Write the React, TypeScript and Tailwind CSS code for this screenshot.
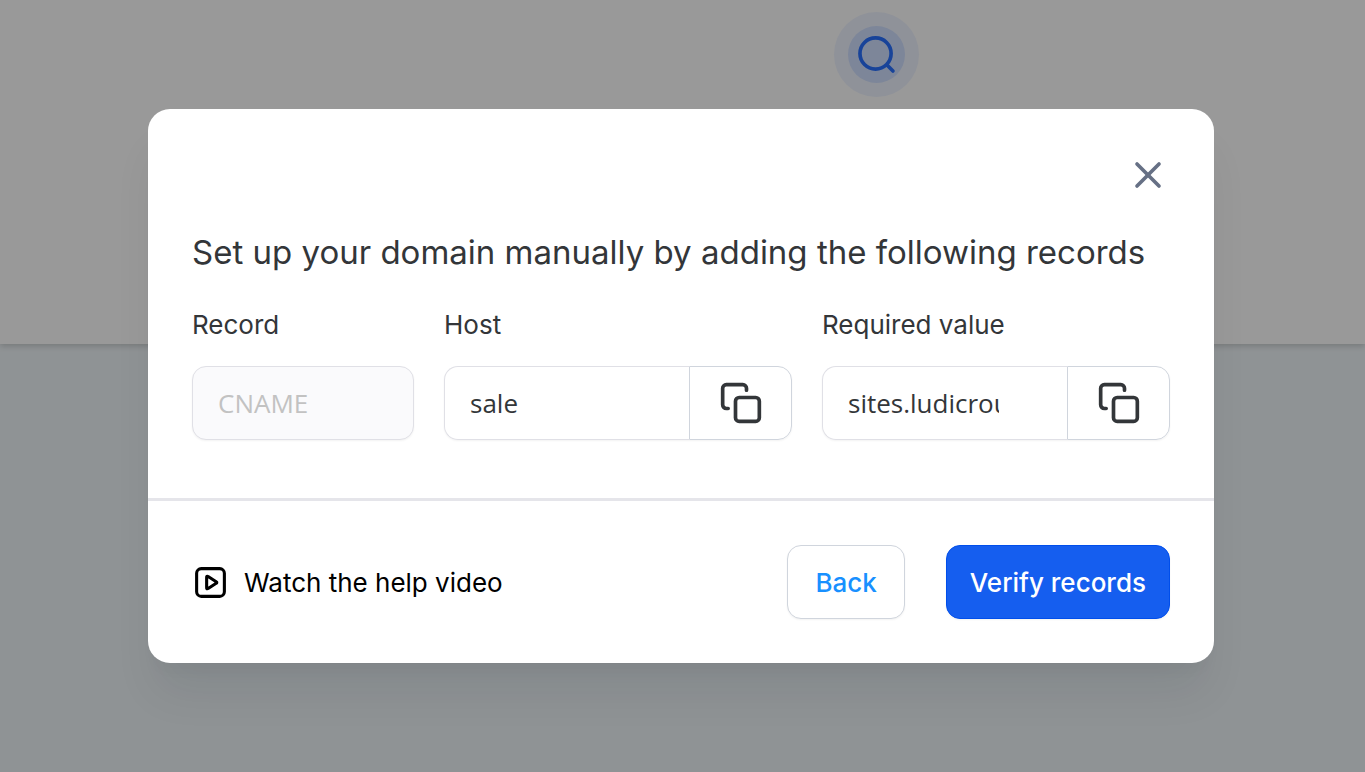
import React, { useState } from "react";
import { X } from "lucide-react";

function SearchIcon() {
  return (
    <svg
      className="size-11"
      viewBox="0 0 24 24"
      fill="none"
      stroke="currentColor"
      strokeWidth="2"
      strokeLinecap="round"
      strokeLinejoin="round"
      aria-hidden="true"
    >
      <path d="M20.7 20.7l-3.5-3.5M19.7 11.2a8.5 8.5 0 1 1-17 0 8.5 8.5 0 0 1 17 0z" />
    </svg>
  );
}

function PlaySquareIcon() {
  return (
    <svg
      className="size-[37px]"
      viewBox="0 0 24 24"
      fill="none"
      stroke="currentColor"
      strokeWidth="2"
      strokeLinecap="round"
      strokeLinejoin="round"
      aria-hidden="true"
    >
      <rect x="3" y="3" width="18" height="18" rx="3" />
      <path d="M9.5 8.97c0-.48 0-.72.1-.85a.5.5 0 0 1 .36-.2c.17-.01.37.12.77.38l4.72 3.03c.35.23.52.34.58.48a.5.5 0 0 1 0 .38c-.06.14-.23.25-.58.48l-4.72 3.03c-.4.26-.6.39-.77.38a.5.5 0 0 1-.36-.2c-.1-.13-.1-.37-.1-.85V8.97z" />
    </svg>
  );
}

function CopyIcon() {
  return (
    <svg
      className="size-11"
      viewBox="0 0 24 24"
      fill="none"
      stroke="currentColor"
      strokeWidth="2"
      strokeLinecap="round"
      strokeLinejoin="round"
      aria-hidden="true"
    >
      <rect x="9" y="9" width="13" height="13" rx="2" />
      <path d="M5 15H4a2 2 0 0 1-2-2V4a2 2 0 0 1 2-2h9a2 2 0 0 1 2 2v1" />
    </svg>
  );
}

function CopyField({
  id,
  label,
  value,
  onChange,
}: {
  id: string;
  label: string;
  value: string;
  onChange: (value: string) => void;
}) {
  return (
    <div className="flex min-w-0 flex-col gap-[23px]">
      <label htmlFor={id} className="text-[26px] leading-9">
        {label}
      </label>
      <div className="flex h-[74px] rounded-[14px] shadow-xs">
        <div className="min-w-0 flex-1 rounded-l-[14px] border border-r-0 border-[#e0e0e6] pr-[68px] pl-[25px]">
          <input
            id={id}
            type="text"
            value={value}
            onChange={(event) => onChange(event.target.value)}
            className="h-full w-full bg-transparent font-['Open_Sans','Noto_Sans',sans-serif] text-[26px] text-[#333639] outline-none"
          />
        </div>
        <button
          type="button"
          aria-label={`Copy ${label}`}
          onClick={() => navigator.clipboard?.writeText(value)}
          className="flex w-[103px] items-center justify-center rounded-r-[14px] border border-[#d0d5dd] bg-white text-[#333639]"
        >
          <CopyIcon />
        </button>
      </div>
    </div>
  );
}

export default function App() {
  const [host, setHost] = useState("sale");
  const [requiredValue, setRequiredValue] = useState("sites.ludicrous.cloud");

  return (
    <div className="relative min-h-screen bg-[#eff5f8] font-['Inter',sans-serif]">
      <header className="flex h-[344px] items-start justify-end bg-white pt-3 pr-[446px] shadow-[0_2px_6px_rgb(0_0_0/0.18)]">
        <div className="flex size-[85px] items-center justify-center rounded-full bg-[#eff4ff]">
          <div className="flex size-[57px] items-center justify-center rounded-full bg-[#d1e0ff] text-[#2970ff]">
            <SearchIcon />
          </div>
        </div>
      </header>

      <div className="absolute inset-0 bg-black/40 pt-[109px] pr-[151px] pl-[148px]">
        <div
          role="dialog"
          aria-modal="true"
          aria-labelledby="dialog-title"
          className="overflow-hidden rounded-[22px] bg-white text-[#333639] shadow-[0_36px_44px_-8px_rgb(16_24_40/0.08),0_14px_16px_-8px_rgb(16_24_40/0.03)]"
        >
          <div className="px-11 pt-11 pb-[58px]">
            <div className="flex justify-end">
              <button type="button" aria-label="Close" className="text-[#667085]">
                <X className="size-11" />
              </button>
            </div>

            <h2
              id="dialog-title"
              className="mt-[31px] text-[33px] leading-[48px] whitespace-nowrap"
            >
              Set up your domain manually by adding the following records
            </h2>

            <div className="mt-[31px] grid grid-cols-[222fr_348fr_348fr] gap-[30px]">
              <div className="flex min-w-0 flex-col gap-[23px]">
                <label htmlFor="record" className="text-[26px] leading-9">
                  Record
                </label>
                <input
                  id="record"
                  type="text"
                  value="CNAME"
                  disabled
                  className="h-[74px] w-full rounded-[14px] border border-[#e0e0e6] bg-[#fafafc] px-[25px] font-['Open_Sans','Noto_Sans',sans-serif] text-[26px] text-[#c2c2c2] shadow-xs"
                />
              </div>
              <CopyField id="host" label="Host" value={host} onChange={setHost} />
              <CopyField
                id="required-value"
                label="Required value"
                value={requiredValue}
                onChange={setRequiredValue}
              />
            </div>
          </div>

          <div className="flex items-center justify-between border-t-3 border-[#e5e5ea] px-11 py-11">
            <a href="#help-video" className="flex items-center gap-[15px] text-[26px] text-black">
              <PlaySquareIcon />
              Watch the help video
            </a>
            <div className="flex gap-[41px] text-[26px] font-medium">
              <button
                type="button"
                className="h-[74px] rounded-[14px] border border-[#d0d5dd] bg-white px-[27px] text-[#1890ff] shadow-xs"
              >
                Back
              </button>
              <button
                type="button"
                className="h-[74px] rounded-[14px] border border-[#004eeb] bg-[#155eef] px-[23px] text-white shadow-xs"
              >
                Verify records
              </button>
            </div>
          </div>
        </div>
      </div>
    </div>
  );
}
